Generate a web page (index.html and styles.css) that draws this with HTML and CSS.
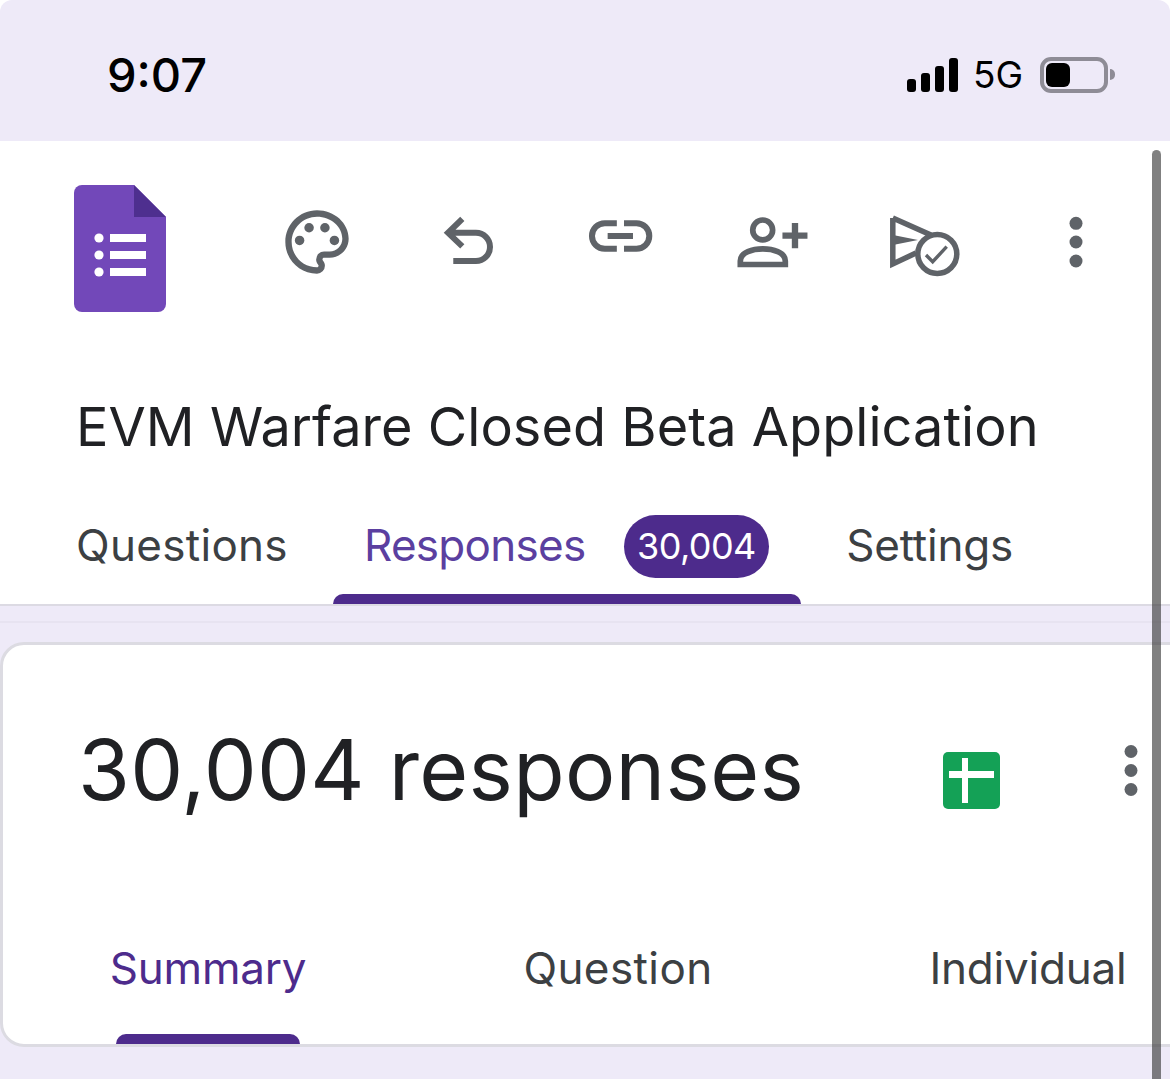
FILE: index.html
```html
<!DOCTYPE html>
<html lang="en">
<head>
    <meta charset="UTF-8">
    <meta name="viewport" content="width=device-width, initial-scale=1.0">
    <title>EVM Warfare Closed Beta Application - Google Forms</title>
    <link rel="stylesheet" href="styles.css">
</head>
<body>
    <div class="status_bar">
        <span class="status_time">9:07</span>
        <div class="status_right">
            <div class="signal">
                <i class="bar1"></i><i class="bar2"></i><i class="bar3"></i><i class="bar4"></i>
            </div>
            <span class="network">5G</span>
            <div class="battery"><i class="battery_fill"></i></div>
            <i class="battery_nub"></i>
        </div>
    </div>

    <div class="sheet">
        <header class="form_header">
            <div class="toolbar">
                <svg class="forms_logo" viewBox="0 0 92 127">
                    <path fill="#7248b9" d="M8 0H60L92 32V119a8 8 0 0 1-8 8H8a8 8 0 0 1-8-8V8a8 8 0 0 1 8-8z"/>
                    <path fill="#4e2f8f" d="M60 0L92 32H60z"/>
                    <circle fill="#fff" cx="25" cy="53" r="4.6"/>
                    <circle fill="#fff" cx="25" cy="70" r="4.6"/>
                    <circle fill="#fff" cx="25" cy="87" r="4.6"/>
                    <path fill="#fff" d="M36 49H72V57H36zM36 66H72V74H36zM36 83H72V91H36z"/>
                </svg>

                <svg class="tool_icon first_icon" viewBox="0 0 24 24" fill="#5f6368">
                    <path d="M12 22C6.49 22 2 17.51 2 12S6.49 2 12 2s10 4.04 10 9c0 3.31-2.69 6-6 6h-1.77c-.28 0-.5.22-.5.5 0 .12.05.23.13.33.41.47.64 1.06.64 1.67A2.5 2.5 0 0 1 12 22zm0-18c-4.41 0-8 3.59-8 8s3.59 8 8 8c.28 0 .5-.22.5-.5a.54.54 0 0 0-.14-.35c-.41-.46-.63-1.05-.63-1.65a2.5 2.5 0 0 1 2.5-2.5H16c2.21 0 4-1.79 4-4 0-3.86-3.59-7-8-7z"/>
                    <circle cx="6.5" cy="11.5" r="1.5"/>
                    <circle cx="9.5" cy="7.5" r="1.5"/>
                    <circle cx="14.5" cy="7.5" r="1.5"/>
                    <circle cx="17.5" cy="11.5" r="1.5"/>
                </svg>

                <svg class="tool_icon" viewBox="0 0 24 24" fill="none" stroke="#5f6368" stroke-width="1.9">
                    <path d="M10.2 4.7L5.7 9.1L10.2 13.4M5.7 9.1H14.5a4.45 4.45 0 0 1 0 8.9H7.35"/>
                </svg>

                <svg class="tool_icon" viewBox="0 0 24 24" fill="none" stroke="#5f6368" stroke-width="1.9">
                    <path d="M11 6.05H7.2a4.05 4.05 0 0 0 0 8.1H11M13.26 6.05H17.2a4.05 4.05 0 0 1 0 8.1H13.26M8.1 10.1H16.1"/>
                </svg>

                <svg class="tool_icon" viewBox="0 0 24 24" fill="none" stroke="#5f6368" stroke-width="1.8">
                    <circle cx="9.06" cy="8.2" r="3.14"/>
                    <path d="M2 19.1V18C2 15.2 6 14.2 9.1 14.2S16.2 15.2 16.2 18V19.1Z"/>
                    <path stroke-width="2" d="M15.3 10H23.2M19.26 6V14"/>
                </svg>

                <svg class="tool_icon" viewBox="0 0 76 76" fill="none" stroke="#5f6368" stroke-width="5.5">
                    <path d="M7.8 14V60L31 49M7.8 14L46 31"/>
                    <path fill="#5f6368" stroke="none" d="M8 31L33 36L8 41z"/>
                    <circle fill="#fff" cx="52.3" cy="50" r="19.5"/>
                    <path stroke-width="3.4" d="M41 51L47.7 57.7L61.7 42.7"/>
                </svg>

                <svg class="tool_icon" viewBox="0 0 76 76" fill="#5f6368">
                    <circle cx="39" cy="19.3" r="6.5"/>
                    <circle cx="39" cy="38" r="6.5"/>
                    <circle cx="39" cy="57" r="6.5"/>
                </svg>
            </div>

            <h1 class="form_title">EVM Warfare Closed Beta Application</h1>

            <nav class="main_tabs">
                <a class="main_tab">Questions</a>
                <a class="main_tab active"><span class="tab_label">Responses</span><span class="count_badge">30,004</span></a>
                <a class="main_tab">Settings</a>
            </nav>
        </header>

        <div class="band"></div>

        <section class="card">
            <div class="card_head">
                <h2 class="response_count">30,004 responses</h2>
                <svg class="sheets_icon" viewBox="0 0 57 57">
                    <rect width="57" height="57" rx="5" fill="#14a156"/>
                    <path fill="#fff" d="M6 19H51V26H6zM19 6H25V51H19z"/>
                </svg>
                <svg class="card_more" viewBox="0 0 20 58" fill="#5f6368">
                    <circle cx="10" cy="9.5" r="6.5"/>
                    <circle cx="10" cy="28.5" r="6.5"/>
                    <circle cx="10" cy="47.5" r="6.5"/>
                </svg>
            </div>
            <nav class="sub_tabs">
                <a class="sub_tab active">Summary</a>
                <a class="sub_tab">Question</a>
                <a class="sub_tab">Individual</a>
            </nav>
        </section>

        <div class="scrollbar"></div>
    </div>
</body>
</html>
```

FILE: styles.css
```css
* {
    box-sizing: border-box;
}
html, body {
    height: 100%;
}
html {
    background-color: #fff;
}
body {
    margin: 0;
    color: #202124;
    font-family: Inter, Roboto, sans-serif;
    overflow: hidden;
}

/* status bar */
.status_bar {
    height: 141px;
    display: flex;
    justify-content: space-between;
    align-items: center;
    padding: 8px 55px 0 107px;
    background-color: #eeeaf8;
    border-radius: 12px 12px 0 0;
}
.status_time {
    font-size: 47px;
    font-weight: 500;
    color: #000;
}
.status_right {
    display: flex;
    align-items: center;
}
.signal {
    display: flex;
    align-items: flex-end;
    gap: 5px;
    height: 34px;
}
.signal i {
    display: block;
    width: 9px;
    background-color: #000;
    border-radius: 3px;
}
.signal .bar1 { height: 13px; }
.signal .bar2 { height: 19px; }
.signal .bar3 { height: 26px; }
.signal .bar4 { height: 34px; }
.network {
    font-size: 37px;
    color: #000;
    margin: 0 17px 0 15px;
}
.battery {
    width: 68px;
    height: 36px;
    padding: 2px;
    border: 4px solid #8e8c96;
    border-radius: 11px;
}
.battery_fill {
    display: block;
    width: 24px;
    height: 100%;
    background-color: #000;
    border-radius: 6px;
}
.battery_nub {
    display: block;
    width: 5px;
    height: 11px;
    margin-left: 2px;
    background-color: #8e8c96;
    border-radius: 0 6px 6px 0;
}

/* page */
.sheet {
    position: relative;
    height: 938px;
    overflow: hidden;
    background-color: #eeeaf8;
}
.form_header {
    background-color: #fff;
    border-bottom: 2px solid #dcdae3;
    height: 465px;
}
.toolbar {
    display: flex;
    align-items: flex-start;
    padding: 44px 0 0 74px;
    gap: 75.7px;
}
.forms_logo {
    width: 92px;
    height: 127px;
    flex: none;
}
.tool_icon {
    width: 76px;
    height: 76px;
    flex: none;
    margin-top: 19px;
}
.first_icon {
    margin-left: 37px;
}
.form_title {
    margin: 80px 0 0 76px;
    font-size: 54px;
    font-weight: 400;
    line-height: 70px;
    letter-spacing: 0.05px;
    white-space: nowrap;
}
.main_tabs {
    display: flex;
    gap: 12px;
    padding-left: 43px;
    margin-top: 52px;
}
.main_tab {
    position: relative;
    display: flex;
    align-items: center;
    height: 90px;
    padding: 0 33px 29px;
    font-size: 44px;
    letter-spacing: -0.2px;
    color: #3c4043;
}
.main_tab:first-child {
    letter-spacing: 0.3px;
}
.main_tab.active {
    padding: 0 32px 29px 31px;
    color: #5b3fa0;
}
.tab_label {
    letter-spacing: -0.7px;
}
.main_tab.active::after {
    content: "";
    position: absolute;
    left: 0;
    right: 0;
    bottom: 0;
    height: 10px;
    background-color: #4d2b8c;
    border-radius: 10px 10px 0 0;
}
.count_badge {
    margin: 3px 0 0 38px;
    padding: 0 13.5px;
    height: 63px;
    line-height: 63px;
    font-size: 36px;
    letter-spacing: -0.6px;
    color: #fff;
    background-color: #4d2b8c;
    border-radius: 32px;
}
.band {
    height: 36px;
    background: linear-gradient(#eeeaf8 15px, #e7e3f1 15px, #e7e3f1 17px, #eeeaf8 17px);
}

.card {
    width: 1300px;
    height: 405px;
    background-color: #fff;
    border: 3px solid #dcdbe2;
    border-radius: 24px;
}
.card_head {
    display: flex;
    align-items: flex-start;
    padding: 77px 0 0 75px;
}
.response_count {
    margin: 0;
    width: 865px;
    font-size: 84px;
    font-weight: 400;
    line-height: 96px;
    letter-spacing: 0.3px;
    white-space: nowrap;
}
.sheets_icon {
    width: 57px;
    height: 57px;
    flex: none;
    margin-top: 30px;
}
.card_more {
    width: 20px;
    height: 58px;
    flex: none;
    margin: 20px 0 0 121px;
}
.sub_tabs {
    display: grid;
    grid-template-columns: repeat(3, 410px);
    margin-top: 120px;
}
.sub_tab {
    position: relative;
    height: 106px;
    text-align: center;
    font-size: 44px;
    letter-spacing: -0.2px;
    line-height: 60px;
    color: #3c4043;
}
.sub_tab:nth-child(2) {
    letter-spacing: 0.4px;
}
.sub_tab.active {
    color: #4d2b8c;
}
.sub_tab.active::after {
    content: "";
    position: absolute;
    left: 113px;
    width: 184px;
    bottom: 0;
    height: 10px;
    background-color: #4d2b8c;
    border-radius: 10px 10px 0 0;
}

.scrollbar {
    position: absolute;
    top: 9px;
    bottom: 0;
    left: 1152px;
    width: 9px;
    background-color: rgba(60, 60, 60, 0.65);
    border-radius: 5px 5px 0 0;
}
```
